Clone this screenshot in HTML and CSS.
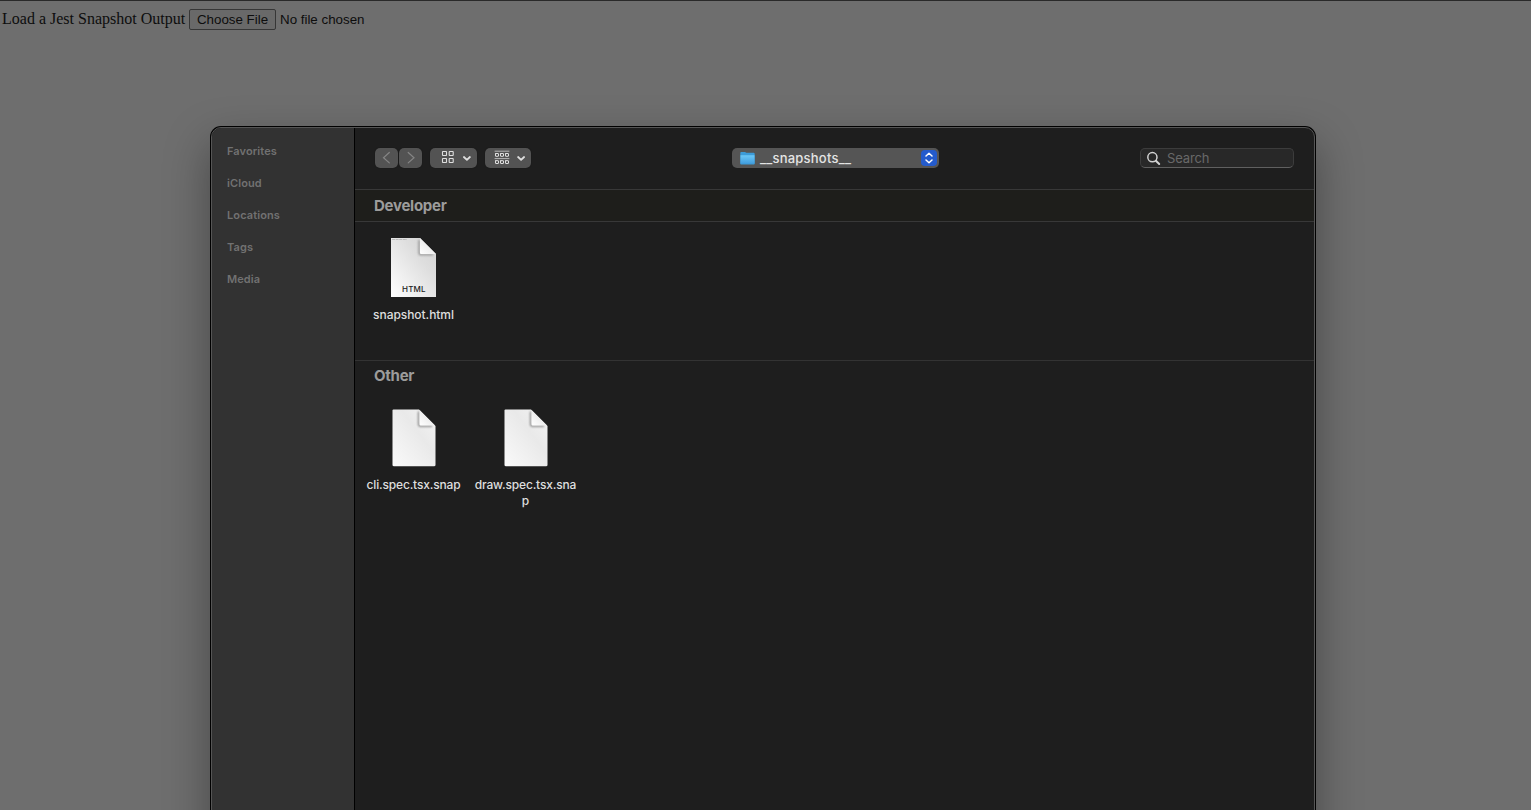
FILE: index.html
```html
<!DOCTYPE html>
<html lang="en">
<head>
<meta charset="utf-8">
<title>Jest Snapshot</title>
<link rel="stylesheet" href="styles.css">
</head>
<body>
<svg class="defs" width="0" height="0" aria-hidden="true">
  <defs>
    <linearGradient id="paper" x1="0" y1="1" x2="1" y2="0"><stop offset="0" stop-color="#fafafa"/><stop offset=".6" stop-color="#e9e9e9"/><stop offset="1" stop-color="#f4f4f4"/></linearGradient>
    <linearGradient id="html-paper" x1="0" y1="1" x2="1" y2="0"><stop offset="0" stop-color="#fff"/><stop offset=".65" stop-color="#dedede"/><stop offset="1" stop-color="#d2d2d2"/></linearGradient>
    <linearGradient id="fold" x1="0" y1="1" x2="1" y2="0"><stop offset="0" stop-color="#fff"/><stop offset="1" stop-color="#ddd"/></linearGradient>
    <linearGradient id="folder" x1="0" y1="0" x2="0" y2="1"><stop offset="0" stop-color="#6cc8f8"/><stop offset="1" stop-color="#439fdf"/></linearGradient>
    <filter id="soft" x="-50%" y="-50%" width="200%" height="200%"><feGaussianBlur stdDeviation="1"/></filter>
    <symbol id="snap-file" viewBox="0 0 45 59">
      <path d="M2.5 1.5H28L44.5 18V57Q44.5 58.3 43 58.3H3Q1.5 58.3 1.5 57V2.5Q1.5 1.5 2.5 1.5Z" fill="url(#paper)"/>
      <path d="M27.7 3.5V15.5Q27.7 18 29.5 18H41" fill="none" stroke="#777" stroke-width="1.5" filter="url(#soft)"/>
      <path d="M28.5 2L44 17.5H29.5Q28.5 17.5 28.5 16.5Z" fill="url(#fold)"/>
    </symbol>
  </defs>
</svg>
<main class="page">
  <span class="page-label">Load a Jest Snapshot Output</span>
  <button class="choose">Choose File</button>
  <span class="status">No file chosen</span>
</main>
<div class="dialog">
  <nav class="sidebar">
    <span>Favorites</span><span>iCloud</span><span>Locations</span><span>Tags</span><span>Media</span>
  </nav>
  <section class="content">
    <header class="toolbar">
      <div class="nav">
        <span class="nav-button"><svg width="23" height="20" viewBox="0 0 23 20"><path d="M14.3 4.5L8.5 9.7L14.3 14.9"/></svg></span>
        <span class="nav-button"><svg width="23" height="20" viewBox="0 0 23 20"><path d="M9.2 4.5L15 9.7L9.2 14.9"/></svg></span>
      </div>
      <span class="view icons-view">
        <svg width="47" height="20" viewBox="0 0 47 20"><g stroke-width="1.1"><rect x="12.5" y="3.5" width="4" height="4" rx=".4"/><rect x="19.2" y="3.5" width="4" height="4" rx=".4"/><rect x="12.5" y="10.5" width="4" height="4" rx=".4"/><rect x="19.2" y="10.5" width="4" height="4" rx=".4"/></g><path d="M33.9 9L36.9 11.8L39.9 9" stroke-width="1.8"/></svg>
      </span>
      <span class="view group-view">
        <svg width="46" height="20" viewBox="0 0 46 20"><g stroke-width="1"><path d="M10 3.2H24M10 10.6H24" stroke="#b5b5b5"/><rect x="10.5" y="5.5" width="3" height="2.8" rx=".3"/><rect x="15.5" y="5.5" width="3" height="2.8" rx=".3"/><rect x="20.5" y="5.5" width="3" height="2.8" rx=".3"/><rect x="10.5" y="12.7" width="3" height="2.8" rx=".3"/><rect x="15.5" y="12.7" width="3" height="2.8" rx=".3"/><rect x="20.5" y="12.7" width="3" height="2.8" rx=".3"/></g><path d="M33.1 9L36.1 11.8L39.1 9" stroke-width="1.8"/></svg>
      </span>
      <div class="location">
        <svg class="folder" width="15" height="14" viewBox="0 0 15 14"><path d="M.3 2Q.3 1 1.3 1H5L6.4 1.8H13.6Q14.7 1.8 14.7 3V12.8Q14.7 13.6 13.9 13.6H1.1Q.3 13.6 .3 12.8Z" fill="#3c9bd8"/><path d="M.5 4.2H14.5V12.4H.5Z" fill="url(#folder)"/></svg>
        <span class="location-name">__snapshots__</span>
        <span class="stepper"><svg width="16" height="16" viewBox="0 0 16 16"><path d="M5 6L8 3.2L11 6M5 10L8 12.8L11 10" fill="none" stroke="#fff" stroke-width="1.5" stroke-linecap="round" stroke-linejoin="round"/></svg></span>
      </div>
      <div class="search">
        <svg width="15" height="15" viewBox="0 0 15 15" fill="none" stroke="#d2d2d2" stroke-linecap="round"><circle cx="6.4" cy="6.2" r="4.6" stroke-width="1.5"/><path d="M9.9 9.7L13.2 13" stroke-width="2"/></svg>
        <span>Search</span>
      </div>
    </header>
    <h2 class="group-title developer"><span>Developer</span></h2>
    <div class="files first">
      <div class="file">
        <svg width="45" height="59" viewBox="0 0 45 59"><path d="M0 0H29L45 16V59H0Z" fill="url(#html-paper)"/><path d="M1 1.5H16" stroke="#aaa" stroke-width=".7" stroke-dasharray="3 .6"/><path d="M28.2 2V14.5Q28.2 16.6 30 16.6H42" fill="none" stroke="#888" stroke-width="1.5" filter="url(#soft)"/><path d="M29 0L45 16H30Q29 16 29 15Z" fill="url(#fold)"/><text class="badge" x="22.9" y="54" text-anchor="middle">HTML</text></svg>
        <span class="name html-name">snapshot.html</span>
      </div>
    </div>
    <h2 class="group-title other"><span>Other</span></h2>
    <div class="files">
      <div class="file"><svg width="45" height="59"><use href="#snap-file"/></svg><span class="name">cli.spec.tsx.snap</span></div>
      <div class="file"><svg width="45" height="59"><use href="#snap-file"/></svg><span class="name">draw.spec.tsx.sna<br>p</span></div>
    </div>
  </section>
</div>
</body>
</html>
```
FILE: styles.css
```css
* { box-sizing: border-box; }
body { margin: 0; height: 810px; overflow: hidden; position: relative; background: #6e6e6e; font-family: Inter, sans-serif; }
svg { display: block; flex: none; }
.defs { position: absolute; }
.page { display: flex; align-items: center; height: 38px; padding: 0 0 0 2px; border-top: 1px solid #292929; color: #0d0d0d; font: 16px "Liberation Serif", serif; white-space: nowrap; }
.page-label { width: 187px; margin-top: -1px; }
.choose { width: 87px; height: 21px; padding: 0; border: 1px solid #363636; border-radius: 2px; background: #696969; color: #0d0d0d; font: 13.33px "Liberation Sans", sans-serif; }
.status { margin-left: 4px; font: 13.33px "Liberation Sans", sans-serif; }
.dialog { position: absolute; left: 211px; top: 127px; width: 1104px; height: 720px; display: flex; border: 1px solid #555; border-radius: 10px; overflow: hidden; background: #1e1e1e; box-shadow: 0 0 0 1px #000, 0 18px 44px 2px rgba(0,0,0,.34); }
.sidebar { width: 143px; flex: none; display: flex; flex-direction: column; padding: 7px 0 0 15px; border-right: 1px solid #000; background: #323232; color: #717171; font-size: 11px; font-weight: 600; letter-spacing: .11px; }
.sidebar span { height: 32px; line-height: 32px; }
.content { flex: 1; min-width: 0; }
.toolbar { height: 62px; display: flex; align-items: flex-start; padding: 20px 20px 0; border-bottom: 1px solid #383838; }
.nav { display: flex; gap: 1px; margin-right: 8px; }
.nav-button, .view { height: 20px; border-radius: 5px; background: #535353; box-shadow: 0 0 1px rgba(0,0,0,.6); }
.nav-button svg { fill: none; stroke: #858585; stroke-width: 1.2; stroke-linecap: round; }
.view svg { fill: none; stroke: #dedede; stroke-linecap: round; stroke-linejoin: round; }
.icons-view { width: 47px; margin-right: 8px; }
.group-view { width: 46px; }
.location { width: 207px; height: 20px; margin-left: 201px; padding: 0 2px 0 8px; display: flex; align-items: center; border-radius: 5px; background: #555; color: #e4e4e4; font-size: 13px; font-weight: 500; }
.folder { margin-right: 5px; }
.location-name { letter-spacing: .22px; line-height: 18px; padding-bottom: 1px; }
.stepper { width: 16px; height: 16px; margin-left: auto; border-radius: 4px; background: #245bcc; }
.search { width: 154px; height: 20px; margin-left: auto; padding-left: 5px; display: flex; align-items: center; gap: 6px; border: 1px solid #3c3c3c; border-bottom-color: #606060; border-radius: 5px; background: #282828; color: #686868; font-size: 13px; letter-spacing: -.15px; }
.group-title { margin: 0; padding-left: 19px; color: #9c9c9b; font-size: 15px; font-weight: 700; letter-spacing: -.26px; }
.developer { height: 32px; line-height: 31px; border-bottom: 1px solid #383838; background: #1e1e1b; }
.other { height: 32px; line-height: 30px; border-top: 1px solid #333; }
.files { display: flex; padding-left: 2px; padding-top: 16px; }
.first { height: 138px; }
.file { width: 112px; display: flex; flex-direction: column; align-items: center; padding-left: 1px; }
.name { margin-top: 10px; color: #dedede; font-size: 12px; font-weight: 500; line-height: 16px; letter-spacing: -.17px; text-align: center; white-space: nowrap; }
.html-name { letter-spacing: -.06px; }
.badge { font: 500 8px Inter, sans-serif; letter-spacing: .15px; fill: #222; }
```
